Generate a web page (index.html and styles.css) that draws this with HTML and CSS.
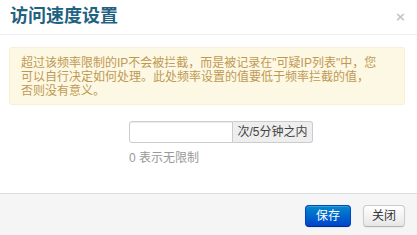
FILE: index.html
```html
<!DOCTYPE html>
<html lang="zh-CN">
<head>
    <meta charset="UTF-8">
    <title>访问速度设置</title>
    <link rel="stylesheet" href="styles.css">
</head>
<body>
    <div class="modal">
        <div class="modal-header">
            <h3>访问速度设置</h3>
            <button class="close" type="button">×</button>
        </div>
        <div class="modal-body">
            <div class="alert">
                超过该频率限制的IP不会被拦截，而是被记录在"可疑IP列表"中，您可以自行决定如何处理。此处频率设置的值要低于频率拦截的值，否则没有意义。
            </div>
            <div class="form-row">
                <div class="input-append">
                    <input type="text" class="rate-input">
                    <span class="add-on">次/5分钟之内</span>
                </div>
                <p class="help">0 表示无限制</p>
            </div>
        </div>
        <div class="modal-footer">
            <button class="btn btn-primary">保存</button>
            <button class="btn">关闭</button>
        </div>
    </div>
</body>
</html>
```

FILE: styles.css
```css
body {
    margin: 0;
    background-color: #fff;
    font-family: "Liberation Sans", "Noto Sans CJK SC", sans-serif;
    font-size: 12px;
    color: #333;
}

.modal {
    width: 417px;
    height: 235px;
    display: flex;
    flex-direction: column;
    background-color: #fff;
}

.modal-header {
    display: flex;
    justify-content: space-between;
    align-items: center;
    padding: 3px 11px 5px 10px;
    border-bottom: 1px solid #eee;
}

.modal-header h3 {
    margin: 0;
    font-size: 18px;
    line-height: 26px;
    font-weight: bold;
    color: #1f6281;
}

.close {
    background: none;
    border: none;
    padding: 0;
    font-family: "DejaVu Sans", sans-serif;
    font-size: 13px;
    font-weight: bold;
    color: #c4c4c4;
    cursor: pointer;
}

.modal-body {
    flex: 1;
    padding: 12px 12px 0 9px;
}

.alert {
    padding: 8px 27px 6px 11px;
    background-color: #fcf8e3;
    border: 1px solid #fbeed5;
    border-radius: 3px;
    color: #c09853;
    line-height: 14px;
}

.form-row {
    margin: 16px 0 0 120px;
}

.input-append {
    display: flex;
}

.rate-input {
    box-sizing: border-box;
    width: 104px;
    height: 22px;
    margin: 0;
    padding: 2px 5px;
    border: 1px solid #ccc;
    border-radius: 3px 0 0 3px;
    box-shadow: inset 0 1px 1px rgba(0, 0, 0, 0.075);
}

.add-on {
    box-sizing: border-box;
    width: 80px;
    height: 22px;
    line-height: 20px;
    text-align: center;
    background-color: #eee;
    border: 1px solid #ccc;
    border-left: none;
    border-radius: 0 3px 3px 0;
    color: #444;
}

.help {
    margin: 8px 0 0;
    line-height: 14px;
    color: #999;
}

.modal-footer {
    display: flex;
    justify-content: flex-end;
    gap: 12px;
    height: 42px;
    padding: 11px 12px 0;
    box-sizing: border-box;
    background-color: #f5f5f5;
    border-top: 1px solid #ddd;
    align-items: flex-start;
}

.btn {
    height: 22px;
    padding: 0 8px;
    font-family: inherit;
    font-size: 12px;
    line-height: 20px;
    color: #333;
    background-color: #f5f5f5;
    background-image: linear-gradient(to bottom, #fff, #e6e6e6);
    border: 1px solid #ccc;
    border-bottom-color: #b3b3b3;
    border-radius: 4px;
    box-shadow: inset 0 1px 0 rgba(255, 255, 255, 0.2), 0 1px 2px rgba(0, 0, 0, 0.05);
    cursor: pointer;
}

.btn-primary {
    padding: 0 10px;
    color: #fff;
    background-color: #006dcc;
    background-image: linear-gradient(to bottom, #0088cc, #0044cc);
    border-color: #0044cc #0044cc #002a80;
}
```
